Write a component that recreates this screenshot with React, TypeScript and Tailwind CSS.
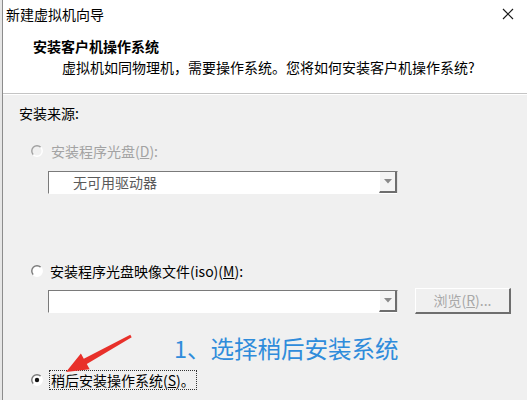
import React from "react";

const font = { fontFamily: '"Noto Sans CJK SC", "Noto Sans", sans-serif' };

const Radio = ({ checked = false, disabled = false }: { checked?: boolean; disabled?: boolean }) => (
  <svg width="12" height="12" viewBox="0 0 12 12" className="shrink-0">
    <circle cx="6" cy="6" r="5.2" fill={disabled ? "#f0f0f0" : "#ffffff"} />
    <path d="M9.7 2.3 A5.2 5.2 0 0 0 2.3 9.7" fill="none" stroke={disabled ? "#a0a0a0" : "#7a7a7a"} strokeWidth="1.4" />
    <path d="M2.3 9.7 A5.2 5.2 0 0 0 9.7 2.3" fill="none" stroke="#ffffff" strokeWidth="1.4" />
    {checked && <circle cx="6" cy="6" r="2.2" fill="#111111" />}
  </svg>
);

const Combo = ({ text }: { text?: string }) => (
  <div className="flex w-[350px] h-[23px] bg-white border-t border-l border-t-[#7a7a7a] border-l-[#7a7a7a] border-b border-r border-b-[#ffffff] border-r-[#e3e3e3]">
    <div className="flex-1 flex items-center pl-[24px] text-[14px] text-[#5a5a5a]">{text}</div>
    <div className="w-[18px] flex items-center justify-center bg-[#f4f4f4] border-r-2 border-b-2 border-r-[#6e6e6e] border-b-[#6e6e6e] border-l border-l-[#ffffff]">
      <svg width="8" height="5" viewBox="0 0 8 5">
        <path d="M0 0 H8 L4 4.5 Z" fill="#8a8a8a" />
      </svg>
    </div>
  </div>
);

export default function App() {
  return (
    <div className="relative w-[527px] h-[400px] overflow-hidden flex bg-[#f0f0f0] text-black" style={font}>
      <div className="w-[3px] bg-[#e6e6e6] border-r border-[#8c8c8c]" />
      <div className="flex-1 flex flex-col">
        <div className="bg-white h-[94px] border-b border-[#c4c4c4] flex flex-col">
          <div className="h-[28px] flex items-center justify-between pl-[3px] pr-[13px]">
            <span className="text-[14px] leading-[20px]">新建虚拟机向导</span>
            <svg width="12" height="12" viewBox="0 0 12 12">
              <path d="M1 1 L11 11 M11 1 L1 11" stroke="#1a1a1a" strokeWidth="1.2" />
            </svg>
          </div>
          <div className="ml-[30px] mt-[8px] text-[14px] leading-[20px] font-bold">安装客户机操作系统</div>
          <div className="ml-[59px] mt-[1px] text-[14px] leading-[20px]">虚拟机如同物理机，需要操作系统。您将如何安装客户机操作系统?</div>
        </div>
        <div className="border-t border-white" />
        <div className="flex flex-col">
          <div className="ml-[16px] mt-[8px] h-[20px] text-[14px] leading-[20px]">安装来源:</div>

          <div className="ml-[28px] mt-[18px] h-[20px] flex items-center gap-[8px] text-[14px] text-[#a3a3a3]">
            <Radio disabled />
            <span>安装程序光盘(<span className="underline">D</span>):</span>
          </div>

          <div className="ml-[45px] mt-[10px]">
            <Combo text="无可用驱动器" />
          </div>

          <div className="ml-[28px] mt-[67px] h-[20px] flex items-center gap-[7px] text-[14px]">
            <Radio />
            <span>安装程序光盘映像文件(iso)(<span className="underline">M</span>):</span>
          </div>

          <div className="ml-[45px] mt-[7px] h-[26px] flex items-center gap-[17px]">
            <Combo />
            <div className="w-[96px] h-[26px] flex items-center justify-center bg-[#f0f0f0] border-t border-l border-t-[#ffffff] border-l-[#ffffff] border-r-2 border-b-2 border-r-[#6e6e6e] border-b-[#6e6e6e] text-[14px] text-[#a8a8a8]">
              浏览(<span className="underline">R</span>)...
            </div>
          </div>

          <div className="ml-[171px] mt-[19px] text-[23.5px] leading-[30px] text-[#2f8cdb]">1、选择稍后安装系统</div>

          <div className="ml-[28px] mt-[7px] h-[20px] flex items-center gap-[6px] text-[14px]">
            <Radio checked />
            <span className="border border-dotted border-[#333333] px-[1px] leading-[18px]">
              稍后安装操作系统(<span className="underline">S</span>)。
            </span>
          </div>
        </div>
      </div>
      <svg className="absolute left-0 top-0 pointer-events-none" width="527" height="400" viewBox="0 0 527 400">
        <polygon
          points="130.3,334.7 83.8,358.7 80.9,353.4 66,372 89.7,369.2 86.8,363.9 131.7,337.3"
          fill="#e8302a"
        />
      </svg>
    </div>
  );
}
